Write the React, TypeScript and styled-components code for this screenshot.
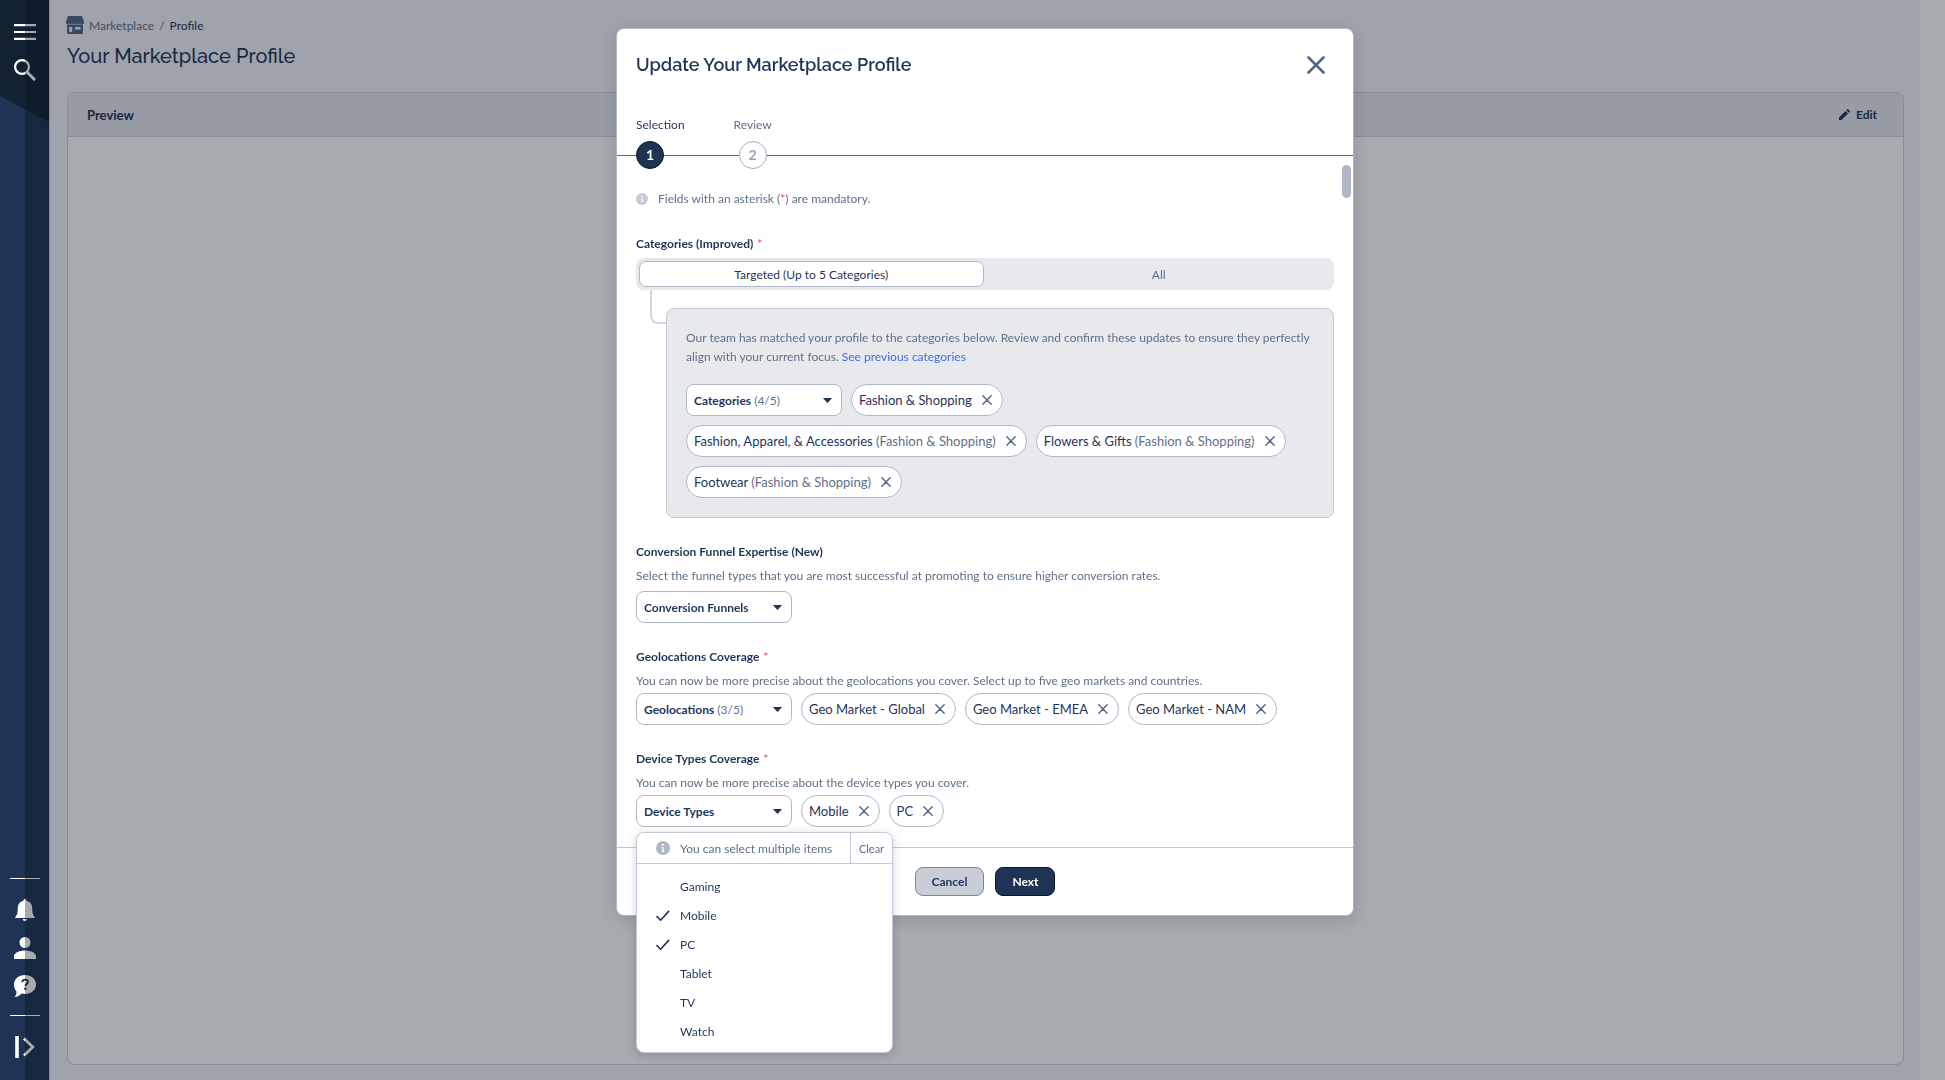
import React, { useState } from "react";
import styled, { createGlobalStyle, css } from "styled-components";

const color = {
  ink: "#1f3558",
  muted: "#5f7089",
  line: "#b0b8c6",
  soft: "#e8e9ed",
  navy: "#1f3354",
  danger: "#f0454e",
  link: "#3f6fe0",
};

const GlobalStyle = createGlobalStyle`
  *, *::before, *::after { box-sizing: border-box; }
  html, body, #root { height: 100%; }
  body { margin: 0; background: #fff; overflow: hidden; }
  body, button, input, select { font-family: Lato, "Open Sans", sans-serif; color: ${color.ink}; }
  button, select { cursor: pointer; }
  h1, h2, p, ul, ol, fieldset { margin: 0; padding: 0; border: 0; }
`;

/* ---------- page ---------- */

const Shell = styled.div`
  display: flex;
  min-height: 100vh;
  padding-right: 25px;
`;

const Sidebar = styled.nav`
  position: relative;
  flex: none;
  display: flex;
  flex-direction: column;
  align-items: center;
  justify-content: space-between;
  width: 50px;
  padding: 21px 0 22px;
  border-right: 1px solid #c9cdd6;
  background: ${color.navy};
`;

const SidebarCap = styled.svg`
  position: absolute;
  top: 0;
  left: 0;
  width: 49px;
  height: 123px;
`;

const SidebarGroup = styled.div`
  position: relative;
  display: flex;
  flex-direction: column;
  align-items: center;
  gap: 16px;
`;

const SidebarRule = styled.hr`
  width: 30px;
  height: 1px;
  margin: 0 0 4px;
  border: 0;
  background: #fff;
  &:not(:first-child) { margin: 2px 0 4px; }
`;

const IconButton = styled.button`
  display: grid;
  place-items: center;
  width: 22px;
  height: 22px;
  padding: 0;
  border: 0;
  background: none;
  color: #fff;
`;

const Main = styled.main`
  flex: 1;
  display: flex;
  flex-direction: column;
  padding: 15px 16px 15px 17px;
  background: #f3f4fa;
`;

const Breadcrumb = styled.nav`
  display: flex;
  align-items: center;
  gap: 5px;
  height: 20px;
  margin-left: -1px;
  font-size: 12px;
  color: ${color.muted};
  a { color: inherit; text-decoration: none; }
  span { color: ${color.ink}; }
  i { font-style: normal; }
`;

const PageTitle = styled.h1`
  margin: 8px 0 23px;
  font: 500 20px/26px Raleway, Lato, sans-serif;
`;

const Panel = styled.section`
  flex: 1;
  border: 1px solid #cdd1dc;
  border-radius: 8px;
  overflow: hidden;
  background: #fff;
`;

const PanelHeader = styled.header`
  display: flex;
  align-items: center;
  justify-content: space-between;
  height: 44px;
  padding: 0 26px 0 19px;
  border-bottom: 1px solid #cdd1dc;
  background: #e6e8ee;
  h2 { font-size: 13px; font-weight: 700; }
`;

const EditButton = styled.button`
  display: flex;
  align-items: center;
  gap: 6px;
  padding: 0;
  border: 0;
  background: none;
  font-size: 12px;
  font-weight: 700;
`;

/* ---------- dialog ---------- */

const Overlay = styled.div`
  position: fixed;
  inset: 0 0 0 25px;
  display: flex;
  justify-content: center;
  align-items: flex-start;
  padding-top: 28px;
  background: rgba(11, 20, 31, 0.36);
`;

const Dialog = styled.div`
  position: relative;
  width: 738px;
  max-width: 100%;
  border: 1px solid ${color.line};
  border-radius: 8px;
  background: #fff;
  box-shadow: 0 4px 16px rgba(20, 34, 56, 0.16);
`;

const DialogHeader = styled.header`
  display: flex;
  align-items: center;
  justify-content: space-between;
  height: 72px;
  padding: 0 19px;
  h2 { font: 600 18px/26px Raleway, Lato, sans-serif; }
`;

const CloseButton = styled(IconButton)`
  width: 36px;
  height: 36px;
  color: #556789;
`;

const Steps = styled.ol`
  position: relative;
  display: flex;
  gap: 49px;
  padding: 15px 19px 0;
  list-style: none;
  &::before {
    content: "";
    position: absolute;
    left: 0;
    right: 0;
    bottom: 13px;
    height: 1px;
    background: #556789;
  }
`;

const Step = styled.li<{ $active?: boolean }>`
  position: relative;
  display: flex;
  flex-direction: column;
  align-items: ${(p) => (p.$active ? "flex-start" : "center")};
  gap: 7px;
  font-size: 12px;
  line-height: 18px;
  color: ${(p) => (p.$active ? color.ink : color.muted)};
  b {
    display: grid;
    place-items: center;
    width: 28px;
    height: 28px;
    border: 1px solid ${(p) => (p.$active ? "#0c1420" : "#a5aebd")};
    border-radius: 50%;
    background: ${(p) => (p.$active ? color.navy : "#fff")};
    color: ${(p) => (p.$active ? "#fff" : "#98a3b4")};
    font-size: 14px;
    font-weight: 700;
  }
`;

const ScrollThumb = styled.div`
  position: absolute;
  top: 136px;
  right: 2px;
  width: 9px;
  height: 33px;
  border-radius: 5px;
  background: #afb7c4;
`;

const Body = styled.form`
  padding: 20px 19px;
`;

const Note = styled.p`
  display: flex;
  align-items: center;
  gap: 10px;
  margin-bottom: 27px;
  font-size: 12px;
  line-height: 19px;
  color: ${color.muted};
`;

const Star = styled.em`
  font-style: normal;
  font-weight: 400;
  color: ${color.danger};
`;

const Field = styled.section`
  & + & { margin-top: 25px; }
`;

const FieldTitle = styled.h2`
  font-size: 12px;
  line-height: 18px;
  font-weight: 700;
  ${Star} { margin-left: 1px; }
`;

const Help = styled.p<{ $roomy?: boolean }>`
  margin: 6px 0 ${(p) => (p.$roomy ? 6 : 3)}px;
  font-size: 12px;
  line-height: 18px;
  color: ${color.muted};
`;

const Segmented = styled.fieldset`
  display: grid;
  grid-template-columns: 1fr 1fr;
  gap: 3px;
  height: 32px;
  margin-top: 5px;
  padding: 3px;
  border-radius: 8px;
  background: ${color.soft};
`;

const hiddenInput = css`
  position: absolute;
  width: 1px;
  height: 1px;
  margin: 0;
  opacity: 0;
`;

const Segment = styled.label`
  position: relative;
  display: grid;
  place-items: center;
  border: 1px solid transparent;
  border-radius: 7px;
  font-size: 12px;
  color: ${color.muted};
  cursor: pointer;
  input { ${hiddenInput} }
  &:has(input:checked) {
    border-color: ${color.line};
    background: #fff;
    color: ${color.ink};
  }
`;

const Branch = styled.div`
  display: flex;
  padding-left: 14px;
`;

const Elbow = styled.div`
  flex: none;
  width: 16px;
  height: 34px;
  border: solid #d3d7de;
  border-width: 0 0 2px 2px;
  border-bottom-left-radius: 8px;
`;

const Card = styled.div`
  flex: 1;
  margin-top: 18px;
  padding: 19px;
  border: 1px solid #c5cad4;
  border-radius: 8px;
  background: ${color.soft};
  p {
    margin-bottom: 18px;
    font-size: 12px;
    line-height: 19px;
    color: ${color.muted};
  }
  a { color: ${color.link}; text-decoration: none; }
`;

const Controls = styled.div`
  position: relative;
  display: flex;
  flex-wrap: wrap;
  gap: 9px;
`;

const pickerBox = css`
  width: 156px;
  height: 32px;
  padding: 0 9px 0 7px;
  border: 1px solid ${color.line};
  border-radius: 8px;
  background: #fff;
  font-size: 12px;
  font-weight: 700;
`;

const PickerButton = styled.button`
  ${pickerBox}
  display: flex;
  align-items: center;
  justify-content: space-between;
  small { font-size: 12px; font-weight: 400; color: ${color.muted}; }
`;

const SelectWrap = styled.label`
  display: grid;
  align-items: center;
  width: 156px;
  > * { grid-area: 1 / 1; }
  > svg { justify-self: end; margin-right: 10px; pointer-events: none; }
`;

const NativeSelect = styled.select`
  ${pickerBox}
  appearance: none;
`;

const ChipBox = styled.span`
  display: inline-flex;
  align-items: center;
  gap: 10px;
  height: 32px;
  padding: 0 10px 0 7px;
  border: 1px solid ${color.line};
  border-radius: 16px;
  background: #fff;
  font-size: 13px;
  white-space: nowrap;
  small { font-size: 13px; color: ${color.muted}; }
  button {
    display: grid;
    padding: 0;
    border: 0;
    background: none;
    color: #556789;
  }
`;

const Menu = styled.div`
  position: absolute;
  z-index: 2;
  top: 37px;
  left: 0;
  width: 257px;
  border: 1px solid #c3c8d6;
  border-radius: 8px;
  background: #fff;
  box-shadow: 0 2px 10px rgba(20, 34, 56, 0.2);
`;

const MenuHeader = styled.div`
  display: flex;
  align-items: center;
  height: 31px;
  border-bottom: 1px solid #c3c8d6;
  color: ${color.muted};
  font-size: 12px;
  p {
    flex: 1;
    display: flex;
    align-items: center;
    gap: 10px;
    padding-left: 19px;
  }
  button {
    align-self: stretch;
    width: 42px;
    padding: 0;
    border: 0;
    border-left: 1px solid #c3c8d6;
    background: none;
    color: inherit;
    font-size: 11px;
  }
`;

const Options = styled.ul`
  padding: 8px 0 6px;
  list-style: none;
`;

const Option = styled.label`
  position: relative;
  display: grid;
  grid-template-columns: 14px 1fr;
  align-items: center;
  gap: 10px;
  height: 29px;
  padding: 0 19px;
  font-size: 12px;
  cursor: pointer;
  input { ${hiddenInput} }
  input:not(:checked) + svg { visibility: hidden; }
`;

const Footer = styled.footer`
  display: flex;
  justify-content: center;
  gap: 11px;
  padding: 19px;
  border-top: 1px solid #c3c8d2;
`;

const ActionButton = styled.button<{ $primary?: boolean }>`
  height: 29px;
  padding: 0 16px;
  border: 1px solid ${(p) => (p.$primary ? "#0c1420" : "#7486a0")};
  border-radius: 8px;
  background: ${(p) => (p.$primary ? color.navy : "#c9cdd6")};
  color: ${(p) => (p.$primary ? "#fff" : color.ink)};
  font-size: 12px;
  font-weight: 700;
`;

/* ---------- icons ---------- */

const Cross = ({ size, stroke }: { size: number; stroke: number }) => (
  <svg width={size} height={size} viewBox="0 0 18 18" fill="none" stroke="currentColor" strokeWidth={stroke} strokeLinecap="round" aria-hidden>
    <path d="M1.500 1.500l15 15M16.500 1.500l-15 15" />
  </svg>
);

const Caret = () => (
  <svg width="9" height="5" viewBox="0 0 9 5" aria-hidden>
    <path d="M.6 0h7.8q.8 0 .3.6L5 4.6q-.5.5-1 0L.3.6Q-.2 0 .6 0z" fill={color.ink} />
  </svg>
);

const Info = ({ size, fill }: { size: number; fill: string }) => (
  <svg width={size} height={size} viewBox="0 0 14 14" aria-hidden>
    <circle cx="7" cy="7" r="7" fill={fill} />
    <circle cx="7" cy="3.8" r="1" fill="#fff" />
    <path d="M5.7 6h2v4h.7v.9H5.6V10h.8V6.9h-.7z" fill="#fff" />
  </svg>
);

const Check = () => (
  <svg width="14" height="12" viewBox="0 0 14 12" fill="none" stroke={color.ink} strokeWidth="1.6" strokeLinecap="round" strokeLinejoin="round" aria-hidden>
    <path d="M1 6.6l3.6 3.6L12.6 1.4" />
  </svg>
);

const MenuIcon = () => (
  <svg width="22" height="16" viewBox="0 0 22 16" fill="#fff" aria-hidden>
    <path d="M0 0h22v2.200H0zM0 6.900h22v2.200H0zM0 13.800h22V16H0z" />
  </svg>
);

const SearchIcon = () => (
  <svg width="22" height="22" viewBox="0 0 22 22" fill="none" stroke="#fff" aria-hidden>
    <circle cx="8" cy="8" r="6.900" strokeWidth="2.200" />
    <path d="M13.200 13.200l7.800 7.800" strokeWidth="3" />
  </svg>
);

const BellIcon = () => (
  <svg width="22" height="22" viewBox="0 0 22 22" fill="#fff" aria-hidden>
    <path d="M11 0c1 0 1.600.7 1.600 1.700 3.400.8 5.600 3.400 5.600 7 0 4.600.6 7.400 2.600 9.500v.8H1.200v-.8c2-2.100 2.600-4.900 2.600-9.500 0-3.600 2.200-6.200 5.600-7C9.400.7 10 0 11 0zM8.800 20h4.400c0 1.200-.9 2-2.200 2s-2.200-.8-2.200-2z" />
  </svg>
);

const PersonIcon = () => (
  <svg width="22" height="22" viewBox="0 0 22 22" fill="#fff" aria-hidden>
    <circle cx="11" cy="5.500" r="5.500" />
    <path d="M0 22v-2.500C0 15.500 6 13.500 11 13.500s11 2 11 6V22z" />
  </svg>
);

const HelpIcon = () => (
  <svg width="22" height="22" viewBox="0 0 22 22" aria-hidden>
    <path d="M11 0c6.200 0 11 4 11 9.400s-4.800 9.500-11 9.500c-1.300 0-2.500-.2-3.600-.5C5.800 20.600 3.300 21.600.6 22c1.100-1.300 2-3 2-5.300C1 14.800 0 12.300 0 9.400 0 4 4.800 0 11 0z" fill="#fff" />
    <path d="M8.300 7.200c.1-1.700 1.200-2.600 2.800-2.600s2.800.9 2.800 2.300c0 2.100-2.500 2-2.500 4.200" fill="none" stroke={color.navy} strokeWidth="1.900" />
    <circle cx="11.300" cy="13.700" r="1.200" fill={color.navy} />
  </svg>
);

const ExpandIcon = () => (
  <svg width="22" height="22" viewBox="0 0 22 22" fill="none" stroke="#fff" aria-hidden>
    <path d="M3 0v22" strokeWidth="3.600" />
    <path d="M10 2.500l8.800 8.500-8.800 8.500" strokeWidth="2.800" />
  </svg>
);

const StoreIcon = () => (
  <svg width="18" height="18" viewBox="0 0 18 18" fill="#556789" aria-hidden>
    <path d="M2 0h14l2 5.500v1.200a1.600 1.600 0 0 1-3 .8 1.800 1.800 0 0 1-3 0 1.800 1.800 0 0 1-3 0 1.800 1.800 0 0 1-3 0 1.800 1.800 0 0 1-3 0 1.600 1.600 0 0 1-3-.8V5.500z" />
    <path fillRule="evenodd" d="M1 8.500h16V16.500q0 1.500-1.500 1.500h-13Q1 18 1 16.500zM3.200 11V16h3v-5zM9 11v2.500h5.500V11z" />
  </svg>
);

const PencilIcon = () => (
  <svg width="11" height="11" viewBox="0 0 11 11" fill={color.ink} aria-hidden>
    <path d="M0 8.600L6.600 2l2.400 2.400L2.400 11H0zM7.300 1.300L8.400.2q.4-.3.800 0l1.600 1.600q.3.400 0 .8L9.700 3.700z" />
  </svg>
);

/* ---------- parts ---------- */

const Chip = ({ label, group }: { label: string; group?: string }) => (
  <ChipBox>
    <span>
      {label}
      {group && <small> ({group})</small>}
    </span>
    <button type="button" aria-label={`Remove ${label}`}>
      <Cross size={10} stroke={2.6} />
    </button>
  </ChipBox>
);

const Picker = ({ label, count, open, onClick }: { label: string; count?: string; open?: boolean; onClick?: () => void }) => (
  <PickerButton type="button" aria-haspopup="listbox" aria-expanded={!!open} onClick={onClick}>
    <span>
      {label}
      {count && <small> ({count})</small>}
    </span>
    <Caret />
  </PickerButton>
);

const deviceTypes = ["Gaming", "Mobile", "PC", "Tablet", "TV", "Watch"];

export default function App() {
  const [devices, setDevices] = useState(["Mobile", "PC"]);
  const [open, setOpen] = useState(true);
  const toggle = (name: string) =>
    setDevices((list) => (list.includes(name) ? list.filter((d) => d !== name) : [...list, name]));

  return (
    <>
      <GlobalStyle />
      <Shell>
        <Sidebar aria-label="Main">
          <SidebarCap viewBox="0 0 49 123" aria-hidden>
            <path d="M0 0h49v122L0 96z" fill="#122233" />
          </SidebarCap>
          <SidebarGroup>
            <IconButton aria-label="Menu"><MenuIcon /></IconButton>
            <IconButton aria-label="Search"><SearchIcon /></IconButton>
          </SidebarGroup>
          <SidebarGroup>
            <SidebarRule />
            <IconButton aria-label="Notifications"><BellIcon /></IconButton>
            <IconButton aria-label="Account"><PersonIcon /></IconButton>
            <IconButton aria-label="Help"><HelpIcon /></IconButton>
            <SidebarRule />
            <IconButton aria-label="Expand"><ExpandIcon /></IconButton>
          </SidebarGroup>
        </Sidebar>
        <Main>
          <Breadcrumb aria-label="Breadcrumb">
            <StoreIcon />
            <a href="#marketplace">Marketplace</a>
            <i>/</i>
            <span>Profile</span>
          </Breadcrumb>
          <PageTitle>Your Marketplace Profile</PageTitle>
          <Panel>
            <PanelHeader>
              <h2>Preview</h2>
              <EditButton><PencilIcon />Edit</EditButton>
            </PanelHeader>
          </Panel>
        </Main>
      </Shell>

      <Overlay>
        <Dialog role="dialog" aria-modal="true" aria-labelledby="dialog-title">
          <DialogHeader>
            <h2 id="dialog-title">Update Your Marketplace Profile</h2>
            <CloseButton aria-label="Close"><Cross size={18} stroke={2.6} /></CloseButton>
          </DialogHeader>
          <Steps>
            <Step $active>Selection<b>1</b></Step>
            <Step>Review<b>2</b></Step>
          </Steps>
          <ScrollThumb />
          <Body>
            <Note>
              <Info size={12} fill="#c6cad6" />
              <span>Fields with an asterisk (<Star>*</Star>) are mandatory.</span>
            </Note>

            <Field>
              <FieldTitle>Categories (Improved) <Star>*</Star></FieldTitle>
              <Segmented aria-label="Categories">
                <Segment><input type="radio" name="scope" defaultChecked />Targeted (Up to 5 Categories)</Segment>
                <Segment><input type="radio" name="scope" />All</Segment>
              </Segmented>
              <Branch>
                <Elbow />
                <Card>
                  <p>
                    Our team has matched your profile to the categories below. Review and confirm these updates to
                    ensure they perfectly align with your current focus. <a href="#previous">See previous categories</a>
                  </p>
                  <Controls>
                    <Picker label="Categories" count="4/5" />
                    <Chip label="Fashion & Shopping" />
                    <Chip label="Fashion, Apparel, & Accessories" group="Fashion & Shopping" />
                    <Chip label="Flowers & Gifts" group="Fashion & Shopping" />
                    <Chip label="Footwear" group="Fashion & Shopping" />
                  </Controls>
                </Card>
              </Branch>
            </Field>

            <Field>
              <FieldTitle>Conversion Funnel Expertise (New)</FieldTitle>
              <Help $roomy>Select the funnel types that you are most successful at promoting to ensure higher conversion rates.</Help>
              <SelectWrap>
                <NativeSelect aria-label="Conversion Funnels">
                  <option>Conversion Funnels</option>
                </NativeSelect>
                <Caret />
              </SelectWrap>
            </Field>

            <Field>
              <FieldTitle>Geolocations Coverage <Star>*</Star></FieldTitle>
              <Help>You can now be more precise about the geolocations you cover. Select up to five geo markets and countries.</Help>
              <Controls>
                <Picker label="Geolocations" count="3/5" />
                <Chip label="Geo Market - Global" />
                <Chip label="Geo Market - EMEA" />
                <Chip label="Geo Market - NAM" />
              </Controls>
            </Field>

            <Field>
              <FieldTitle>Device Types Coverage <Star>*</Star></FieldTitle>
              <Help>You can now be more precise about the device types you cover.</Help>
              <Controls>
                <Picker label="Device Types" open={open} onClick={() => setOpen(!open)} />
                {devices.map((name) => <Chip key={name} label={name} />)}
                {open && (
                  <Menu>
                    <MenuHeader>
                      <p><Info size={14} fill="#afb7c4" />You can select multiple items</p>
                      <button type="button" onClick={() => setDevices([])}>Clear</button>
                    </MenuHeader>
                    <Options>
                      {deviceTypes.map((name) => (
                        <li key={name}>
                          <Option>
                            <input type="checkbox" checked={devices.includes(name)} onChange={() => toggle(name)} />
                            <Check />
                            <span>{name}</span>
                          </Option>
                        </li>
                      ))}
                    </Options>
                  </Menu>
                )}
              </Controls>
            </Field>
          </Body>
          <Footer>
            <ActionButton type="button">Cancel</ActionButton>
            <ActionButton type="button" $primary>Next</ActionButton>
          </Footer>
        </Dialog>
      </Overlay>
    </>
  );
}
